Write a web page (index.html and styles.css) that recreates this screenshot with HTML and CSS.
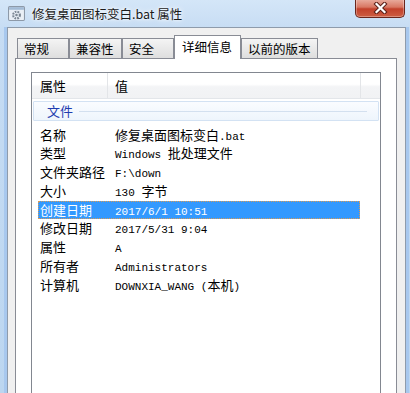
FILE: index.html
```html
<!DOCTYPE html>
<html lang="zh-CN">
<head>
    <meta charset="UTF-8">
    <title>修复桌面图标变白.bat 属性</title>
    <link rel="stylesheet" href="styles.css">
</head>
<body>
<div class="window">
    <div class="title-bar">
        <svg class="title-icon" viewBox="0 0 16 16">
            <rect x="0.5" y="1.5" width="15" height="13" rx="1" fill="#e9eff6" stroke="#8d99a8"/>
            <rect x="1" y="2" width="14" height="2.5" fill="#a3bbd6"/>
            <circle cx="8" cy="9.5" r="3.2" fill="none" stroke="#7b8693" stroke-width="2" stroke-dasharray="1.6 1"/>
            <circle cx="8" cy="9.5" r="1.2" fill="#7b8693"/>
        </svg>
        <div class="title-text">修复桌面图标变白.bat 属性</div>
        <div class="close-button">
            <svg width="15" height="12" viewBox="0 0 15 12">
                <path d="M3.5 2 L11.5 10 M11.5 2 L3.5 10" stroke="#5a2018" stroke-width="4.2" stroke-linecap="square"/>
                <path d="M3.5 2 L11.5 10 M11.5 2 L3.5 10" stroke="#ffffff" stroke-width="2.2" stroke-linecap="square"/>
            </svg>
        </div>
    </div>
    <div class="client">
        <div class="tabs">
            <div class="tab tab-general">常规</div>
            <div class="tab tab-compat">兼容性</div>
            <div class="tab tab-security">安全</div>
            <div class="tab tab-details selected">详细信息</div>
            <div class="tab tab-previous">以前的版本</div>
        </div>
        <div class="tab-panel">
            <div class="details">
                <div class="details-header">
                    <div class="col-name">属性</div>
                    <div class="col-value">值</div>
                    <div class="col-rest"></div>
                </div>
                <div class="group-row">
                    <span class="group-label">文件</span>
                    <span class="group-line"></span>
                </div>
                <div class="rows">
                    <div class="row"><div class="row-name">名称</div><div class="row-value">修复桌面图标变白<span class="mono">.bat</span></div></div>
                    <div class="row"><div class="row-name">类型</div><div class="row-value"><span class="mono">Windows </span>批处理文件</div></div>
                    <div class="row"><div class="row-name">文件夹路径</div><div class="row-value"><span class="mono">F:\down</span></div></div>
                    <div class="row"><div class="row-name">大小</div><div class="row-value"><span class="mono">130 </span>字节</div></div>
                    <div class="row active"><div class="row-name">创建日期</div><div class="row-value"><span class="mono">2017/6/1 10:51</span></div></div>
                    <div class="row"><div class="row-name">修改日期</div><div class="row-value"><span class="mono">2017/5/31 9:04</span></div></div>
                    <div class="row"><div class="row-name">属性</div><div class="row-value"><span class="mono">A</span></div></div>
                    <div class="row"><div class="row-name">所有者</div><div class="row-value"><span class="mono">Administrators</span></div></div>
                    <div class="row"><div class="row-name">计算机</div><div class="row-value"><span class="mono">DOWNXIA_WANG (</span>本机<span class="mono">)</span></div></div>
                </div>
            </div>
        </div>
    </div>
</div>
</body>
</html>
```

FILE: styles.css
```css
* {
    box-sizing: border-box;
}

body {
    margin: 0;
    background: #c5dcf3;
    font-family: "Noto Sans CJK SC", sans-serif;
    overflow: hidden;
}

.window {
    width: 410px;
    height: 393px;
    overflow: hidden;
    display: flex;
    flex-direction: column;
    background: linear-gradient(to bottom, #d4e6f8 0, #c6dcf3 30px, #bcd6f0 100%);
}

.title-bar {
    height: 27px;
    flex-shrink: 0;
    display: flex;
    align-items: center;
}

.title-icon {
    width: 17px;
    height: 17px;
    margin-left: 8px;
}

.title-text {
    margin-left: 7px;
    font-size: 12.5px;
    line-height: 16px;
    color: #1b1b1b;
    text-shadow: 0 0 6px #ffffff, 0 0 3px #ffffff;
}

.close-button {
    align-self: flex-start;
    margin-left: auto;
    margin-right: 5px;
    margin-top: -1px;
    width: 50px;
    height: 19px;
    border: 1px solid #6a261c;
    border-top: none;
    border-radius: 0 0 5px 5px;
    background: linear-gradient(to bottom, #eab0a2 0, #d87763 45%, #c2412b 55%, #cd5e43 100%);
    box-shadow: inset 0 0 0 1px rgba(255, 255, 255, 0.3);
    display: flex;
    align-items: center;
    justify-content: center;
}

.client {
    flex: 1;
    min-height: 0;
    margin: 0 4px 0 7px;
    background: #f0f0f0;
    border: 1px solid #8e9bab;
    border-bottom: none;
    box-shadow: -3px 0 0 #a8c8ee, 3px 0 0 #a8c8ee;
    display: flex;
    flex-direction: column;
}

.tabs {
    display: flex;
    align-items: flex-end;
    height: 23px;
    margin-top: 7px;
    padding-left: 9px;
    flex-shrink: 0;
}

.tab {
    height: 20px;
    padding-left: 6px;
    border: 1px solid #898c95;
    border-bottom: none;
    background: linear-gradient(to bottom, #f4f4f4 0, #e9e9e9 50%, #dedede 100%);
    font-size: 12.5px;
    line-height: 20px;
    color: #000000;
    white-space: nowrap;
}

.tab-general {
    width: 52px;
}

.tab-compat {
    width: 53px;
}

.tab-security {
    width: 52px;
}

.tab-details {
    width: 67px;
}

.tab-previous {
    width: 77px;
}

.tab.selected {
    position: relative;
    z-index: 1;
    height: 24px;
    margin-bottom: -1px;
    padding-left: 7px;
    background: #ffffff;
    line-height: 21px;
}

.tab-panel {
    flex: 1;
    min-height: 0;
    margin: 0 8px 0 7px;
    padding: 13px 15px 0 15px;
    background: #ffffff;
    border: 1px solid #898c95;
    border-bottom: none;
    display: flex;
    flex-direction: column;
}

.details {
    flex: 1;
    border: 1px solid #828790;
    border-bottom: none;
    background: #ffffff;
}

.details-header {
    display: flex;
    height: 26px;
    border-bottom: 1px solid #e3e6ea;
    background: linear-gradient(to bottom, #ffffff 0, #ffffff 45%, #f3f4f6 55%, #f1f2f4 100%);
    font-size: 13px;
    line-height: 25px;
}

.col-name {
    width: 76px;
    padding-left: 8px;
    border-right: 1px solid #e3e5e8;
}

.col-value {
    width: 253px;
    padding-left: 7px;
    border-right: 1px solid #e3e5e8;
}

.col-rest {
    flex: 1;
}

.group-row {
    display: flex;
    align-items: center;
    height: 20px;
    margin: 2px 1px 0 1px;
    padding-left: 13px;
    border: 1px solid #d3e2f3;
    border-radius: 1px;
    background: linear-gradient(to bottom, #fafcff 0, #eef5fc 100%);
}

.group-label {
    font-size: 13px;
    line-height: 18px;
    color: #1e3caf;
}

.group-line {
    flex: 1;
    height: 1px;
    margin: 1px 11px 0 6px;
    background: #d3e0ef;
}

.rows {
    margin-top: 4.5px;
}

.row {
    display: flex;
    width: 322px;
    height: 18.75px;
    margin-left: 6px;
    font-size: 13px;
    line-height: 18.75px;
    color: #000000;
    white-space: nowrap;
}

.row-name {
    width: 77px;
    padding-left: 2px;
}

.mono {
    font-family: "Liberation Mono", monospace;
    font-size: 11px;
}

.row.active {
    background: #3399ff;
    color: #ffffff;
    outline: 1px dotted #d89a56;
    outline-offset: -1px;
}
```
